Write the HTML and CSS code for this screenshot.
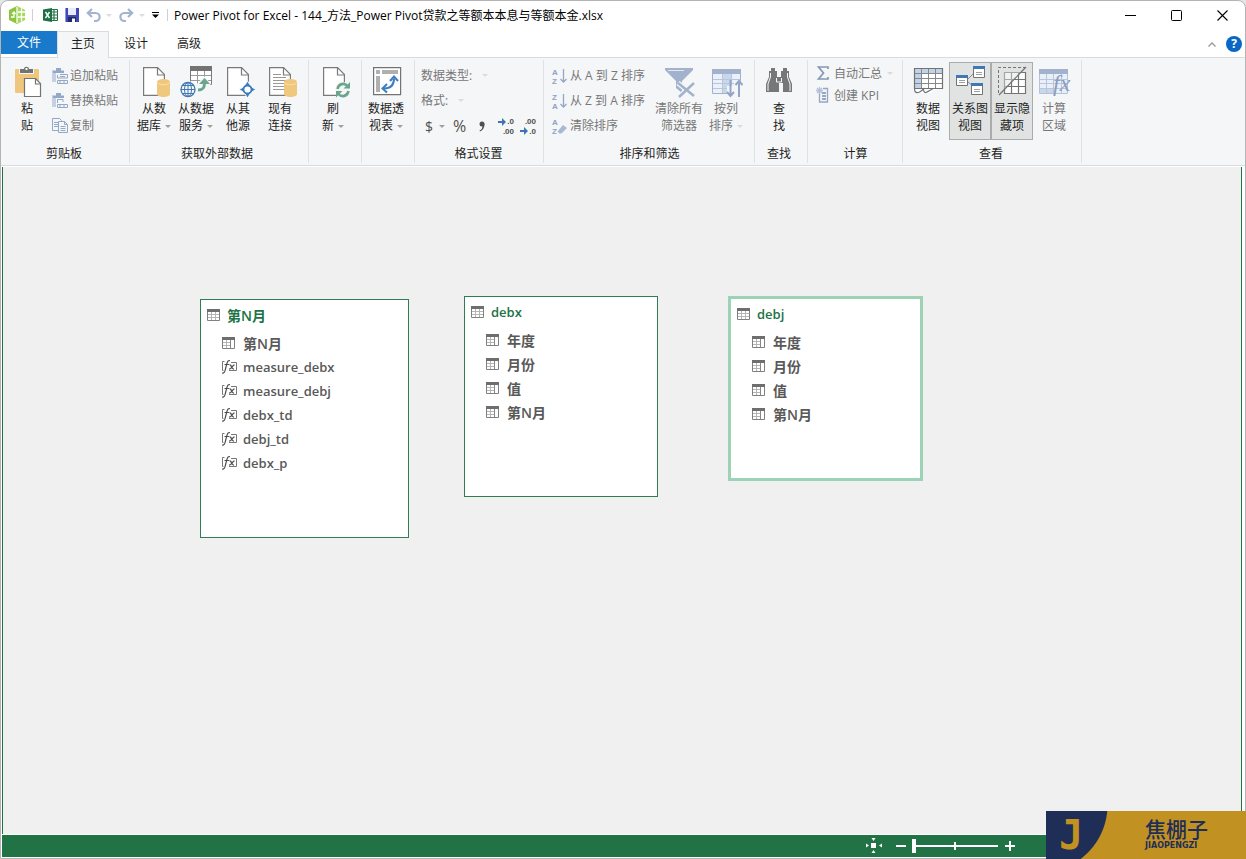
FILE: index.html
```html
<!DOCTYPE html>
<html lang="zh-CN">
<head>
<meta charset="utf-8">
<title>Power Pivot for Excel</title>
<link rel="stylesheet" href="styles.css">
</head>
<body>
<svg class="sprite" aria-hidden="true">
  <symbol id="i-table" viewBox="0 0 13 12">
    <path fill="#fff" d="M0 0h13v12H0z"/><path stroke="#b5b5b5" d="M4.500 3v9M8.500 3v9M1 5.500h11M1 8.500h11"/>
    <path fill="none" stroke="#808080" d="M.5.5h12v11H.5z"/><path fill="#6e6e6e" d="M0 0h13v3H0z"/>
  </symbol>
  <symbol id="i-column" viewBox="0 0 13 12">
    <path fill="#fff" d="M0 0h13v12H0z"/><path stroke="#b5b5b5" d="M4.500 3v9M1 5.500h8M1 8.500h8"/><path stroke="#888" d="M8.500 3v9"/>
    <path fill="none" stroke="#808080" d="M.5.5h12v11H.5z"/><path fill="#6e6e6e" d="M0 0h13v3H0z"/>
  </symbol>
  <symbol id="i-fx" viewBox="0 0 15 14">
    <path fill="none" stroke="#777" d="M2.500 1.500H.5v9h1M9 2.500h5.500v8H7"/>
    <path fill="none" stroke="#505050" stroke-width="1.200" d="M0 13c2 .5 2.800-1 3.200-3L5 3C5.500.8 6.500.3 8 .8M2.500 4.500h4.500"/>
    <path fill="none" stroke="#505050" stroke-width="1.200" d="M7.500 5c2-1 2 4.500 4.500 4M12.500 4.800c-2 0-3 4.700-5.500 4.200"/>
  </symbol>
  <symbol id="i-page" viewBox="0 0 22 29">
    <path fill="#fff" stroke="#7a7a7a" stroke-width="1.200" d="M.6.6h14l6.800 7v20.800H.6z"/>
    <path fill="none" stroke="#7a7a7a" stroke-width="1.200" d="M14.500.6v7.400h6.900"/>
  </symbol>
  <symbol id="i-db" viewBox="0 0 13 18">
    <path fill="#efc87d" d="M0 3C0-1 13-1 13 3v12c0 4-13 4-13 0z"/><path fill="none" stroke="#f8e2b8" d="M.5 3.500c1 3 11 3 12 0"/>
  </symbol>
</svg>

<div class="window">
  <header class="titlebar">
    <svg class="logo" viewBox="0 0 17 18"><path fill="#8cc63f" d="M8 0 0 4v10l8 4z"/><path fill="#a5d75b" d="M8 0v18l8-4V4z"/><path fill="none" stroke="#fff" stroke-width="1.300" d="M8 1v16M9 6h7M9 11h7M12.500 2.500v13M2 11h3V6M3 8l2-2 1.500 2"/></svg>
    <span class="rule"></span>
    <div class="quick">
      <button class="qbtn" aria-label="Excel"><svg width="15" height="14" viewBox="0 0 15 14"><path fill="#fff" stroke="#217346" d="M7 1.500h7.500v11H7z"/><path stroke="#217346" stroke-width="1.200" d="M8 4h6M8 7h6M8 10h6M11 2v10"/><path fill="#1e7145" d="M0 1.500 9 0v14l-9-1.500z"/><path stroke="#fff" stroke-width="1.400" d="m2.500 4 4 6M6.500 4l-4 6"/></svg></button>
      <button class="qbtn" aria-label="保存"><svg width="14" height="14" viewBox="0 0 14 14"><path fill="#3f48b5" d="M0 0h14v14H1l-1-1z"/><path fill="#e8ecfa" d="M3 0h8v7H3z"/><path fill="#22276e" d="M3 9h8v5H3z"/><path fill="#fff" d="M7 10.500h3V14H7z"/><path fill="#8d98e2" d="M0 0h1v13H0z"/></svg></button>
      <button class="qbtn" aria-label="撤消" disabled><svg width="15" height="13" viewBox="0 0 15 13"><path fill="none" stroke="#a3b4d0" stroke-width="2.200" d="M6 0 1.800 4 6 8M2 4h7.500c5.500 0 5.500 8 0 8H8"/></svg></button>
      <span class="arrow pale"></span>
      <button class="qbtn" aria-label="恢复" disabled><svg width="15" height="13" viewBox="0 0 15 13"><path fill="none" stroke="#a3b4d0" stroke-width="2.200" d="m9 0 4.200 4L9 8M13 4H5.500C0 4 0 12 5.500 12H7"/></svg></button>
      <span class="arrow pale"></span>
      <button class="qbtn" aria-label="自定义快速访问工具栏"><svg width="7" height="6" viewBox="0 0 7 6"><path d="M0 0h7v1H0zM0 2.500h7L3.500 6z"/></svg></button>
    </div>
    <span class="rule"></span>
    <h1 class="title">Power Pivot for Excel - 144_方法_Power Pivot贷款之等额本本息与等额本金.xlsx</h1>
    <div class="controls">
      <button aria-label="最小化"><svg width="11" height="11"><path stroke="#000" d="M0 5.500h11"/></svg></button>
      <button aria-label="最大化"><svg width="11" height="11"><rect x=".5" y=".5" width="10" height="10" rx="1" fill="none" stroke="#000"/></svg></button>
      <button aria-label="关闭"><svg width="11" height="11"><path stroke="#000" stroke-width="1.100" d="m.5.5 10 10M10.500.5l-10 10"/></svg></button>
    </div>
  </header>

  <nav class="tabs">
    <button class="tab file">文件</button>
    <button class="tab current">主页</button>
    <button class="tab">设计</button>
    <button class="tab">高级</button>
    <div class="tabtools">
      <button aria-label="折叠功能区"><svg width="8" height="5"><path fill="none" stroke="#999" stroke-width="1.300" d="m.5 4.500 3.500-3.500 3.500 3.500"/></svg></button>
      <button class="help" aria-label="帮助">?</button>
    </div>
  </nav>

  <div class="ribbon">
    <section class="group clipboard">
      <div class="tools">
        <button class="big"><svg class="ico" viewBox="0 0 32 32"><rect x="4" y="3" width="24" height="24" rx="1" fill="#eec77c"/><path fill="#f5f6f7" d="M8 3h15v5H8z"/><path fill="#737373" d="M9 3h4c0-3 5-3 5 0h4v4H9z"/><path fill="#fff" d="M14.500 2h2v2h-2z"/><path fill="#fff" stroke="#737373" stroke-width="1.200" d="M13.500 12.500h11l5 5v13h-16z"/><path fill="none" stroke="#737373" stroke-width="1.200" d="M24.500 12.500v5.500h5"/></svg><span>粘<br>贴</span></button>
        <div class="rows">
          <button class="small" disabled><svg class="sico" viewBox="0 0 16 16"><path fill="#c5d0e2" d="M0 2h12v12H0z"/><path fill="#94a7c6" d="M4 0h5v3h3v2H1V3h3z"/><path fill="#f5f6f7" d="M4 5h12v11H4z"/><path fill="none" stroke="#94a7c6" d="M5.500 7v3h10V6.500H8M5.500 12.500h10v3h-10zM8 13v2M12 13v2M8 8.500h5"/></svg>追加粘贴</button>
          <button class="small" disabled><svg class="sico" viewBox="0 0 16 16"><path fill="#c5d0e2" d="M0 2h12v12H0z"/><path fill="#94a7c6" d="M4 0h5v3h3v2H1V3h3z"/><path fill="#f5f6f7" d="M4 5h12v11H4z"/><path fill="none" stroke="#94a7c6" d="M5.500 10V6.500H11V9M5.500 11.500h10v3h-10zM8 12v2M12 12v2"/></svg>替换粘贴</button>
          <button class="small" disabled><svg class="sico" viewBox="0 0 16 16"><path fill="#f5f6f7" stroke="#94a7c6" d="M.5.500h7l2 2v10h-9z"/><path stroke="#94a7c6" d="M2 4.500h4M2 6.500h4M2 8.500h4"/><path fill="#f5f6f7" stroke="#94a7c6" d="M6.500 3.500h6l3 3v8h-9z"/><path fill="none" stroke="#94a7c6" d="M12.500 3.500v3h3M8.500 8.500h5M8.500 10.500h5M8.500 12.500h5"/></svg>复制</button>
        </div>
      </div>
      <h2>剪贴板</h2>
    </section>

    <section class="group">
      <div class="tools">
        <button class="big"><svg class="ico" viewBox="0 0 32 32"><use href="#i-page" x="5" y="1" width="22" height="29"/><use href="#i-db" x="19" y="13" width="13" height="18"/></svg><span>从数<br>据库<i class="arrow"></i></span></button>
        <button class="big"><svg class="ico" viewBox="0 0 32 32"><path fill="#fff" stroke="#7a7a7a" d="M10.500.5h21v18h-21z"/><path fill="#737373" d="M10 0h22v5H10z"/><path stroke="#999" d="M17.500 5v13M24.500 5v13M11 9.500h20M11 14.500h20"/><path fill="#f5f6f7" d="M0 18h4l4-3 5 1 4 2 7-8 7 8-4 3-4 5-6 4H0z"/><g fill="none" stroke="#4077b5"><circle cx="8" cy="23.500" r="7" fill="#f5f6f7" stroke-width="1.300"/><ellipse cx="8" cy="23.500" rx="3.500" ry="7"/><path d="M8 16.500v14M1 23.500h14M2 19.500h12M2 27.500h12"/></g><path fill="none" stroke="#6ba58b" stroke-width="3" d="M18 24c5 0 6.500-2 6.500-7"/><path fill="#6ba58b" d="m19 18 5.500-6 5.500 6z"/></svg><span>从数据<br>服务<i class="arrow"></i></span></button>
        <button class="big"><svg class="ico" viewBox="0 0 32 32"><use href="#i-page" x="5" y="1" width="22" height="29"/><path fill="#3c7cc0" stroke="#f5f6f7" d="m25.500 15 2.500 4 1.500 2 4.500 2.500-4.500 2.500-1.500 2-2.500 4-2.500-4-1.500-2-4.500-2.500 4.500-2.500 1.500-2z"/><circle cx="25.500" cy="23.500" r="4" fill="#fff" stroke="#3c7cc0" stroke-width="1.800"/></svg><span>从其<br>他源</span></button>
        <button class="big"><svg class="ico" viewBox="0 0 32 32"><use href="#i-page" x="5" y="1" width="22" height="29"/><path stroke="#999" d="M9 8.500h8M9 11.500h13M9 14.500h13M9 17.500h12M9 20.500h12M9 23.500h12"/><use href="#i-db" x="20" y="13" width="13" height="18"/></svg><span>现有<br>连接</span></button>
      </div>
      <h2>获取外部数据</h2>
    </section>

    <section class="group">
      <div class="tools">
        <button class="big"><svg class="ico" viewBox="0 0 32 32"><use href="#i-page" x="6" y="1" width="22" height="29"/><circle cx="26" cy="24" r="8" fill="#f5f6f7"/><path fill="none" stroke="#6ba58b" stroke-width="2.600" d="M20.500 23c1-5.500 7-6.500 10-3M31.500 25c-1 5.500-7 6.500-10 3"/><path fill="#6ba58b" d="M33 16v6.500h-6.500zM19 31.500V25h6.500z"/></svg><span>刷<br>新<i class="arrow"></i></span></button>
      </div>
      <h2></h2>
    </section>

    <section class="group">
      <div class="tools">
        <button class="big"><svg class="ico" viewBox="0 0 32 32"><path fill="#fff" stroke="#737373" stroke-width="1.200" d="M3.600 1.600h27v27h-27z"/><path fill="#b0b0b0" d="M6 4h4v4H6zM12 4h16v4H12zM6 10h4v16H6z"/><path fill="none" stroke="#3c7cc0" stroke-width="2" d="M14 22.500c7 0 10-3 10-10"/><path fill="none" stroke="#3c7cc0" stroke-width="2" d="m20 15 4-4.500 4 4.500M17 18l-4.500 4.500L17 26.500"/></svg><span>数据透<br>视表<i class="arrow"></i></span></button>
      </div>
      <h2></h2>
    </section>

    <section class="group format">
      <div class="tools rows">
        <button class="small" disabled>数据类型: <i class="arrow pale"></i></button>
        <button class="small" disabled>格式: <i class="arrow pale"></i></button>
        <div class="formats">
          <button class="money" aria-label="货币">$<i class="arrow"></i></button>
          <button class="percent">%</button>
          <button aria-label="千位分隔"><svg width="8" height="11" viewBox="0 0 8 11"><circle cx="4" cy="3" r="2.500" fill="#505050"/><path fill="#505050" d="M6.500 3c0 4-2 6.500-4.500 7.500L1.500 9.500C4 8.500 4.500 7 4.500 4z"/></svg></button>
          <button aria-label="增加小数位数"><svg width="16" height="16" viewBox="0 0 16 16"><path fill="#3c74ba" d="M0 3h4V0l4 4-4 4V5H0z"/><text class="digits" x="16" y="6">.0</text><text class="digits" x="16" y="16">.00</text></svg></button>
          <button class="less" aria-label="减少小数位数"><svg width="16" height="16" viewBox="0 0 16 16"><text class="digits" x="16" y="6">.00</text><path fill="#3c74ba" d="M0 12h4V9l4 4-4 4v-3H0z"/><text class="digits" x="16" y="16">.0</text></svg></button>
        </div>
      </div>
      <h2>格式设置</h2>
    </section>

    <section class="group sort">
      <div class="tools">
        <div class="rows">
          <button class="small" disabled><svg class="sico" viewBox="0 0 16 16"><text class="az" x="0" y="7">A</text><text class="az" x="0" y="16">Z</text><path fill="none" stroke="#94a7c6" stroke-width="1.300" d="M11.500 1v13M8.500 11l3 3 3-3"/></svg>从 A 到 Z 排序</button>
          <button class="small" disabled><svg class="sico" viewBox="0 0 16 16"><text class="az" x="0" y="7">Z</text><text class="az" x="0" y="16">A</text><path fill="none" stroke="#94a7c6" stroke-width="1.300" d="M11.500 1v13M8.500 11l3 3 3-3"/></svg>从 Z 到 A 排序</button>
          <button class="small" disabled><svg class="sico" viewBox="0 0 16 16"><text class="az" x="0" y="7">A</text><text class="az" x="0" y="16">Z</text><path fill="#a9b9d3" d="m11 7 4 3-5.500 5.500h-2l-2-2z"/></svg>清除排序</button>
        </div>
        <button class="big wide" disabled><svg class="ico" viewBox="0 0 32 32"><path fill="#a3b2cc" d="M2 2h28v2L19 15v12l-6-5v-7L2 4z"/><path fill="none" stroke="#e3e9f3" d="M5 4.500h16"/><path stroke="#f5f6f7" stroke-width="5" d="m15 17 16 13M31 17 16 31"/><path stroke="#a3b2cc" stroke-width="2.500" d="m15 17 16 13M31 17 16 31"/></svg><span>清除所有<br>筛选器</span></button>
        <button class="big" disabled><svg class="ico" viewBox="0 0 32 32"><path fill="#eaf1fb" stroke="#a3b2cc" d="M2.500 3.500h28v24h-28z"/><path fill="#c9d7ec" d="M12 8h10v19H12z"/><path fill="#a3b2cc" d="M2 3h29v5H2z"/><path stroke="#b9c5da" d="M12.500 8v19M21.500 8v19M3 13.500h27M3 17.500h27M3 22.500h27"/><path fill="#f5f6f7" d="M17 20h7v-5h10v17H17z"/><path fill="none" stroke="#93a6c4" stroke-width="2" d="M20.500 14v15M17 26l3.500 4 3.500-4M29 31V15M25.500 19l3.500-4 3.500 4"/></svg><span>按列<br>排序<i class="arrow pale"></i></span></button>
      </div>
      <h2>排序和筛选</h2>
    </section>

    <section class="group">
      <div class="tools">
        <button class="big"><svg class="ico" viewBox="0 0 32 32"><path fill="#777" d="M8 2h4v3h2v6h4V5h2V2h4v3h2v6l3 7v8h-9v-9h-4v9H3v-8l3-7V5h2z"/><path fill="none" stroke="#f5f6f7" d="M7.500 7v4l-2.500 7v7M24.500 7v4l2.500 7v7M13.500 12v4h5v-4"/></svg><span>查<br>找</span></button>
      </div>
      <h2>查找</h2>
    </section>

    <section class="group calc">
      <div class="tools rows tight">
        <button class="small" disabled><svg class="sico" viewBox="0 0 16 16"><path fill="none" stroke="#8598b8" stroke-width="1.700" d="M12 4V2H2.500l5 6-5 6H12v-2"/></svg>自动汇总<i class="arrow pale"></i></button>
        <button class="small" disabled><svg class="sico" viewBox="0 0 16 16"><path fill="#f5f6f7" stroke="#94a7c6" stroke-width="1.300" d="M3.500 3V15h8V1.500H7"/><path fill="#94a7c6" d="M6 5h4v2H6zM6 8h4v2H6zM6 11h4v2H6z"/><path stroke="#b4c1d8" stroke-width="1.300" d="M3.500 0v7M0 3.500h7M1 1l5 5M6 1 1 6"/></svg>创建 KPI</button>
      </div>
      <h2>计算</h2>
    </section>

    <section class="group view">
      <div class="tools">
        <button class="big"><svg class="ico" viewBox="0 0 32 32"><path fill="#fff" d="M2 2h29v21l-10 1-2 3H4l-2-2z"/><path fill="#bfd3ea" d="M2 2h28v5H2zM2 2h7v20H2z"/><path fill="none" stroke="#888" d="M9.500 2v21M16.500 2v21M23.500 2v21M3 7.500h28M3 12.500h28M3 17.500h28"/><path fill="none" stroke="#737373" stroke-width="1.200" d="M2.500 22.500v-20h28v20zM2.500 23c0 4 3 4 5 3s4-3 4-3 0 4 2 3.500 7-3.500 7-3.500"/></svg><span>数据<br>视图</span></button>
        <button class="big on" aria-pressed="true"><svg class="ico" viewBox="0 0 32 32"><path stroke="#8a8a8a" d="m14 13 6-6M14 16l5 4"/><path fill="#fff" stroke="#737373" d="M2.500 9.500h11v10h-11zM19.500.5h11v11h-11zM17.500 17.500h11v11h-11z"/><path fill="#4077b5" d="M2 9h12v3H2zM19 0h12v3H19zM17 17h12v3H17z"/><path stroke="#a0a0a0" d="M5 14.500h6M5 16.500h6M22 6.500h6M22 8.500h6M20 23.500h6M20 25.500h6"/></svg><span>关系图<br>视图</span></button>
        <button class="big on" aria-pressed="true"><svg class="ico" viewBox="0 0 32 32"><path fill="#fff" d="M8 6h21v22H8z"/><path fill="none" stroke="#737373" stroke-width="1.200" d="M8.500 6.500h21v21h-21zM15.500 6v21M22.500 6v21M8 13.500h21M8 20.500h21"/><path fill="#e0e3e2" d="M3 2h27L3 28z" opacity=".45"/><path fill="none" stroke="#737373" stroke-dasharray="3 2" d="M2.500 27V1.500H29"/><path stroke="#737373" stroke-width="1.200" d="M3 29 30 1"/></svg><span>显示隐<br>藏项</span></button>
        <button class="big" disabled><svg class="ico" viewBox="0 0 32 32"><path fill="#e9f0fa" stroke="#b4c2da" d="M1.500 3.500h28v24h-28z"/><path fill="#c9d7ec" d="M2 22h14v5H2z"/><path fill="#a3b2cc" d="M1 3h29v5H1z"/><path stroke="#b9c5da" d="M8.500 8v19M15.500 8v19M23.500 8v19M2 13.500h28M2 17.500h28M2 22.500h28"/><text class="bigfx" x="15" y="25">fx</text></svg><span>计算<br>区域</span></button>
      </div>
      <h2>查看</h2>
    </section>
  </div>

  <main class="canvas">
    <article class="entity month">
      <h3 class="han"><svg class="tico"><use href="#i-table"/></svg>第N月</h3>
      <ul>
        <li class="han"><svg class="tico"><use href="#i-column"/></svg>第N月</li>
        <li><svg class="fico"><use href="#i-fx"/></svg>measure_debx</li>
        <li><svg class="fico"><use href="#i-fx"/></svg>measure_debj</li>
        <li><svg class="fico"><use href="#i-fx"/></svg>debx_td</li>
        <li><svg class="fico"><use href="#i-fx"/></svg>debj_td</li>
        <li><svg class="fico"><use href="#i-fx"/></svg>debx_p</li>
      </ul>
    </article>
    <article class="entity debx">
      <h3><svg class="tico"><use href="#i-table"/></svg>debx</h3>
      <ul class="han">
        <li><svg class="tico"><use href="#i-column"/></svg>年度</li>
        <li><svg class="tico"><use href="#i-column"/></svg>月份</li>
        <li><svg class="tico"><use href="#i-column"/></svg>值</li>
        <li><svg class="tico"><use href="#i-column"/></svg>第N月</li>
      </ul>
    </article>
    <article class="entity debj">
      <h3><svg class="tico"><use href="#i-table"/></svg>debj</h3>
      <ul class="han">
        <li><svg class="tico"><use href="#i-column"/></svg>年度</li>
        <li><svg class="tico"><use href="#i-column"/></svg>月份</li>
        <li><svg class="tico"><use href="#i-column"/></svg>值</li>
        <li><svg class="tico"><use href="#i-column"/></svg>第N月</li>
      </ul>
    </article>
  </main>

  <footer class="status">
    <button aria-label="适应屏幕"><svg width="16" height="16" viewBox="0 0 16 16"><path fill="#fff" d="M5 5h5v5H5zM5.500 0h4l-2 3zM5.500 15h4l-2-3zM0 5.500v4l3-2zM16 5.500v4l-3-2z"/></svg></button>
    <button class="minus" aria-label="缩小"><svg width="10" height="10"><path fill="#fff" d="M0 4h10v2H0z"/></svg></button>
    <input class="zoom" type="range" min="0" max="100" value="0" aria-label="缩放">
    <button aria-label="放大"><svg width="10" height="10"><path fill="#fff" d="M0 4h10v2H0zM4 0h2v10H4z"/></svg></button>
  </footer>
</div>

<aside class="brand">
  <span class="mark">J</span>
  <div class="name"><strong>焦棚子</strong><small>JIAOPENGZI</small></div>
</aside>
</body>
</html>
```
FILE: styles.css
```css
* { box-sizing: border-box; }
body {
  margin: 0;
  background: #e6e6e6;
  color: #1e1e1e;
  font: 12px/17px "Open Sans", "Noto Sans CJK SC", sans-serif;
}
h1, h2, h3, ul { margin: 0; padding: 0; font: inherit; }
ul { list-style: none; }
button { margin: 0; padding: 0; border: 0; background: none; color: inherit; font: inherit; }
svg { display: block; flex: none; overflow: visible; }
.sprite { position: absolute; width: 0; height: 0; }

.window {
  display: flex;
  flex-direction: column;
  min-height: 100vh;
  border: 1px solid #b4b4b4;
  border-radius: 8px 8px 0 0;
  background: #fff;
}

/* title bar */
.titlebar { display: flex; align-items: center; height: 30px; padding: 0 0 2px 8px; }
.logo { width: 17px; height: 18px; }
.rule { width: 1px; height: 12px; margin: 0 6px; background: #d0d0d0; }
.quick { display: flex; align-items: center; gap: 7px; padding: 0 2px 0 4px; }
.quick .arrow { margin: 0 0 0 -2px; }
.title { flex: 1; color: #000; white-space: nowrap; }
.controls { display: flex; align-self: stretch; }
.controls button { display: grid; place-items: center; width: 46px; }
.arrow {
  display: inline-block;
  width: 0;
  border: 3px solid transparent;
  border-top-color: #a0a0a0;
  border-bottom: 0;
  vertical-align: middle;
}
.arrow.pale { border-top-color: #dcdcdc; }

/* tab strip */
.tabs { display: flex; align-items: flex-start; gap: 1px; height: 26px; }
.tab { width: 52px; height: 24px; }
.tab.file { width: 56px; height: 23px; background: #1979ca; color: #fff; }
.tab.current {
  height: 27px;
  margin-left: -1px;
  padding-bottom: 3px;
  border: 1px solid #dadbdc;
  border-bottom: 0;
  background: #f5f6f7;
  z-index: 1;
}
.tabtools { display: flex; align-items: center; gap: 10px; height: 26px; margin-left: auto; padding-right: 3px; }
.help {
  width: 16px;
  height: 16px;
  border-radius: 8px;
  background: #0b67c5;
  color: #fff;
  font-weight: 700;
  line-height: 16px;
}

/* ribbon */
.ribbon {
  display: flex;
  padding: 2px 0;
  border: solid #dadbdc;
  border-width: 1px 0;
  background: #f5f6f7;
}
.group {
  display: flex;
  flex-direction: column;
  padding: 2px 7px 0 3px;
  border-right: 1px solid #e0e1e3;
}
.group h2 { height: 23px; padding-top: 5px; text-align: center; }
.tools { display: flex; height: 78px; }
.clipboard { width: 129px; padding-left: 5px; }
.clipboard .rows { margin-left: 4px; }
.format { width: 129px; padding-left: 6px; }
.sort { width: 211px; padding-left: 8px; }
.calc { width: 95px; padding-left: 8px; }
.view { padding: 2px 6px 0 4px; }
.big {
  display: flex;
  flex-direction: column;
  align-items: center;
  gap: 2px;
  width: 42px;
  padding-top: 3px;
  border: 1px solid transparent;
  white-space: nowrap;
}
.big.wide { width: 52px; margin-left: auto; }
.big.on { border-color: #a9acab; background: #e0e3e2; }
.big .arrow { margin-left: 4px; }
.ico { width: 32px; height: 32px; }
.rows { display: flex; flex-direction: column; padding-top: 1px; }
.small { display: flex; align-items: center; gap: 2px; height: 25px; white-space: nowrap; }
.small .arrow { margin-left: 8px; }
.tight { padding-top: 0; }
.tight .small { height: 22px; }
.tight .arrow { margin-left: 3px; }
.sico { width: 16px; height: 16px; }
button:disabled { color: #777; }
.formats { display: flex; align-items: center; gap: 12px; height: 26px; padding-left: 4px; color: #505050; }
.money { display: flex; align-items: center; gap: 6px; font-size: 14px; }
.percent { margin-left: -4px; font-size: 16px; }
.less { margin-left: -6px; }
.digits { fill: #505050; font: 700 8px "Liberation Sans", sans-serif; text-anchor: end; }
.az { fill: #8fa2c2; font: 700 8px "Liberation Sans", sans-serif; }
.bigfx { fill: #8c9ebe; font: italic 24px "Liberation Serif", serif; }

/* diagram */
.canvas {
  position: relative;
  flex: 1;
  margin: 1px 3px 1px 1px;
  border: solid #217346;
  border-width: 0 1px;
  background: #f0f0f0;
}
.entity {
  position: absolute;
  padding: 6px;
  border: 1px solid #2f7d55;
  background: #fff;
  color: #595959;
  font-size: 13px;
  font-weight: 600;
}
.entity h3 { display: flex; align-items: center; gap: 7px; height: 18px; margin-bottom: 7px; color: #217346; }
.entity li { display: flex; align-items: center; gap: 7px; height: 24px; padding-left: 15px; }
.entity .han { font-size: 14px; }
.tico { width: 13px; height: 12px; }
li .tico { margin-right: 1px; }
.fico { width: 15px; height: 14px; margin-right: -1px; }
.month { left: 197px; top: 132px; width: 209px; height: 239px; }
.debx { left: 461px; top: 129px; width: 194px; height: 201px; }
.debj { left: 725px; top: 129px; width: 195px; height: 185px; border: 3px solid #9bd3b4; }

/* status bar */
.status {
  display: flex;
  align-items: center;
  justify-content: flex-end;
  gap: 7px;
  height: 22px;
  margin: 0 3px 1px 1px;
  padding-right: 227px;
  background: #217346;
}
.minus { margin: 0 -1px 0 7px; }
.zoom {
  appearance: none;
  width: 86px;
  height: 14px;
  margin: 0;
  background:
    linear-gradient(#fff, #fff) center / 2px 8px no-repeat,
    linear-gradient(#fff, #fff) center / 100% 2px no-repeat;
}
.zoom::-webkit-slider-thumb { appearance: none; width: 4px; height: 14px; background: #fff; }

/* brand badge */
.brand {
  position: absolute;
  right: 0;
  bottom: 0;
  display: flex;
  width: 200px;
  height: 48px;
  background: radial-gradient(circle at -6px -6px, #1e2e57 67px, #c19122 68px);
  color: #1e2e57;
}
.mark { width: 50px; color: #c19122; font: 700 40px/48px "DejaVu Sans Mono", monospace; text-align: center; }
.name { display: flex; flex-direction: column; gap: 3px; padding: 7px 0 0 49px; }
.name strong { font: 500 21px/21px "Noto Sans CJK SC", sans-serif; }
.name small { font: 700 8px/8px "DejaVu Sans", sans-serif; }
```
